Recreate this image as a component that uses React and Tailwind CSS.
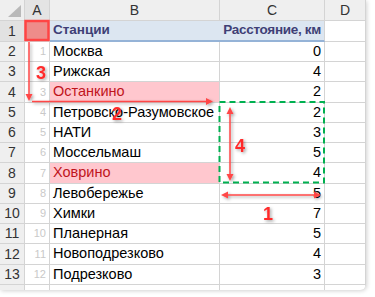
import React from 'react';

const rows = [
  { n: 2, a: '1', b: 'Москва', c: '0', h: 'h-[20px]' },
  { n: 3, a: '', b: 'Рижская', c: '4', h: 'h-[20px]' },
  { n: 4, a: '3', b: 'Останкино', c: '2', h: 'h-[21px]', hl: true },
  { n: 5, a: '4', b: 'Петровско-Разумовское', c: '2', h: 'h-[20px]' },
  { n: 6, a: '5', b: 'НАТИ', c: '3', h: 'h-[20px]' },
  { n: 7, a: '6', b: 'Моссельмаш', c: '5', h: 'h-[20px]' },
  { n: 8, a: '7', b: 'Ховрино', c: '4', h: 'h-[21px]', hl: true },
  { n: 9, a: '8', b: 'Левобережье', c: '5', h: 'h-[20px]' },
  { n: 10, a: '9', b: 'Химки', c: '7', h: 'h-[20px]' },
  { n: 11, a: '10', b: 'Планерная', c: '5', h: 'h-[20px]' },
  { n: 12, a: '11', b: 'Новоподрезково', c: '4', h: 'h-[21px]' },
  { n: 13, a: '12', b: 'Подрезково', c: '3', h: 'h-[20px]' },
];

const ColHead = ({ w, children }) => (
  <div className={`${w} flex items-center justify-center border-r border-[#d4d4d4] text-[14px] text-[#333]`}>
    {children}
  </div>
);

const Overlay = () => (
  <svg className="absolute left-0 top-0 pointer-events-none" width="375" height="297" viewBox="0 0 375 297">
    <defs>
      <filter id="sh" x="-50%" y="-50%" width="200%" height="200%">
        <feDropShadow dx="1.5" dy="1.5" stdDeviation="1.5" floodColor="#000" floodOpacity="0.35" />
      </filter>
    </defs>
    <rect x="25.5" y="21" width="23" height="19" fill="#ee8c8a" stroke="#ff4444" strokeWidth="2.5" />
    <rect x="219.5" y="102" width="104.5" height="80.5" fill="none" stroke="#00b050" strokeWidth="2" strokeDasharray="6 4" />
    <g filter="url(#sh)" stroke="#ff4747" fill="#ff4747">
      <line x1="29" y1="42" x2="29" y2="96" strokeWidth="1.5" />
      <path d="M25.5 94 L32.5 94 L29 101 Z" stroke="none" />
      <line x1="32" y1="101.5" x2="208" y2="101.5" strokeWidth="1.5" />
      <path d="M206 98 L206 105 L213 101.5 Z" stroke="none" />
      <line x1="230" y1="112" x2="230" y2="176" strokeWidth="1.5" />
      <path d="M226.5 114 L233.5 114 L230 107 Z" stroke="none" />
      <path d="M226.5 174 L233.5 174 L230 181 Z" stroke="none" />
      <line x1="226" y1="195" x2="316" y2="195" strokeWidth="1.5" />
      <path d="M228 191.5 L228 198.5 L221 195 Z" stroke="none" />
      <path d="M314 191.5 L314 198.5 L321 195 Z" stroke="none" />
    </g>
    <g filter="url(#sh)" fill="#ff2a2a" fontFamily="Liberation Sans, Arial, sans-serif" fontWeight="700" fontSize="18" textAnchor="middle">
      <text x="41" y="79">3</text>
      <text x="117" y="120">2</text>
      <text x="240" y="152">4</text>
      <text x="268" y="220">1</text>
    </g>
  </svg>
);

export default function App() {
  return (
    <div className="relative w-[375px] h-[297px] bg-white overflow-hidden" style={{ fontFamily: '"Liberation Sans", Arial, sans-serif' }}>
      <div className="w-[366px] h-[290px] overflow-hidden rounded-br-md shadow-[1px_1px_4px_rgba(0,0,0,0.18)] bg-white">
        <div className="flex h-[21px] bg-[#efefef] border-b border-[#d4d4d4]">
          <div className="relative w-[25px] border-r border-[#d4d4d4]">
            <div className="absolute right-[3px] bottom-[3px] w-0 h-0 border-l-[13px] border-l-transparent border-b-[12px] border-b-[#b9b9b9]" />
          </div>
          <ColHead w="w-[25px] bg-[#e4e4e4]">A</ColHead>
          <ColHead w="w-[170px]">B</ColHead>
          <ColHead w="w-[105px]">C</ColHead>
          <ColHead w="w-[41px]">D</ColHead>
        </div>

        <div className="flex h-[21px]">
          <div className="w-[25px] bg-[#e2e2e2] border-r border-b border-[#d4d4d4] flex items-center justify-center text-[14px] text-[#333]">1</div>
          <div className="w-[25px] border-r border-b border-[#d4d4d4]" />
          <div className="w-[275px] flex bg-[#dce6f1] border-b-2 border-[#95b3d7] text-[13.5px] font-bold text-[#3f3f76] border-r border-r-[#d4d4d4] whitespace-nowrap">
            <div className="w-[170px] pl-[3px] flex items-center">Станции</div>
            <div className="flex-1 pr-[3px] flex items-center justify-end tracking-[-0.3px]">Расстояние, км</div>
          </div>
          <div className="w-[41px] border-r border-b border-[#d4d4d4]" />
        </div>

        {rows.map((r) => (
          <div key={r.n} className={`flex ${r.h}`}>
            <div className="w-[25px] bg-[#efefef] border-r border-b border-[#d4d4d4] flex items-center justify-center text-[14px] text-[#333]">
              {r.n}
            </div>
            <div className="w-[25px] border-r border-b border-[#d4d4d4] flex items-center justify-end pr-[3px] text-[11px] text-[#c9c9c9]">
              {r.a}
            </div>
            <div
              className={`w-[170px] border-r border-b border-[#d4d4d4] flex items-center pl-[3px] text-[14.5px] whitespace-nowrap ${
                r.hl ? 'bg-[#ffc7ce] text-[#c0141c]' : 'text-black'
              }`}
            >
              {r.b}
            </div>
            <div className="w-[105px] border-r border-b border-[#d4d4d4] flex items-center justify-end pr-[3px] text-[14.5px] text-black">
              {r.c}
            </div>
            <div className="w-[41px] border-r border-b border-[#d4d4d4]" />
          </div>
        ))}

        <div className="flex h-[10px]">
          <div className="w-[25px] bg-[#efefef] border-r border-[#d4d4d4]" />
          <div className="w-[25px] border-r border-[#d4d4d4]" />
          <div className="w-[170px] border-r border-[#d4d4d4]" />
          <div className="w-[105px] border-r border-[#d4d4d4]" />
          <div className="w-[41px] border-r border-[#d4d4d4]" />
        </div>
      </div>
      <Overlay />
    </div>
  );
}
